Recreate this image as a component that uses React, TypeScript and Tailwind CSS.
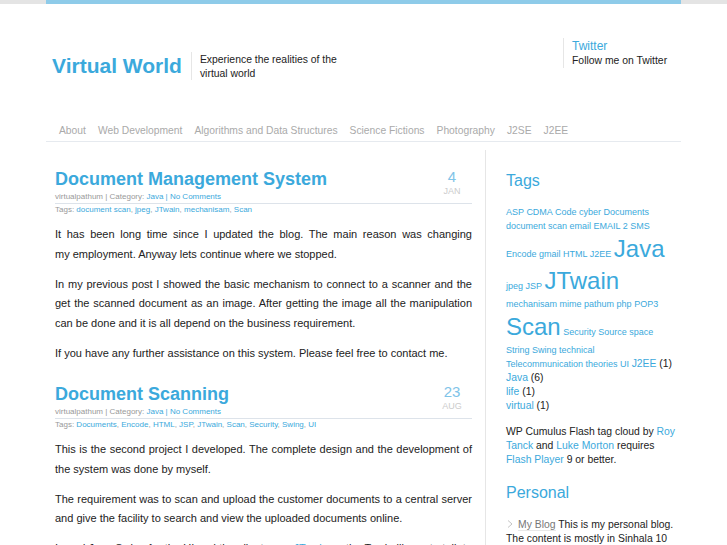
const blue = 'text-[#3ba9dc]';

function Post({
  title,
  day,
  month,
  tags,
  children,
}: {
  title: string;
  day: string;
  month: string;
  tags: string[];
  children: React.ReactNode;
}) {
  return (
    <article className="mb-[20px]">
      <div className="flex h-[22px] items-start">
        <h2 className={`flex-1 text-[18px] font-bold leading-[22px] ${blue}`}>{title}</h2>
        <div className="mr-[5px] w-[30px] pt-[1px] text-center">
          <div className="text-[15px] leading-[16px] text-[#7fc4e8]">{day}</div>
          <div className="text-[9px] leading-[12px] text-[#cccccc]">{month}</div>
        </div>
      </div>
      <div className="mt-[2px] border-b border-[#dde3ea] pb-[1px] text-[8px] leading-[10px] text-[#999999]">
        virtualpathum | Category: <a className={blue}>Java</a> <span className={blue}>|</span>{' '}
        <a className={blue}>No Comments</a>
      </div>
      <div className="text-[8px] leading-[11px] text-[#999999]">
        Tags:{' '}
        {tags.map((t, i) => (
          <span key={t}>
            <a className={blue}>{t}</a>
            {i < tags.length - 1 ? ', ' : ''}
          </span>
        ))}
      </div>
      <div className="mt-[10px] text-justify text-[11px] leading-[19.5px] text-[#222222] [&>p]:mb-[10.5px]">
        {children}
      </div>
    </article>
  );
}

function Tag({ big, children }: { big?: boolean; children: React.ReactNode }) {
  return big ? (
    <a className={`text-[24px] leading-[32px] ${blue}`}>{children}</a>
  ) : (
    <a className={blue}>{children}</a>
  );
}

export default function App() {
  return (
    <div className="min-h-[545px] overflow-hidden bg-white font-['Liberation_Sans',Arial,sans-serif]">
      {/* top strip */}
      <div className="h-[4px] bg-[#e4e4e4]">
        <div className="mx-auto h-full w-[635px] bg-[#8ecbe9]" />
      </div>

      <div className="mx-auto w-[635px]">
        {/* Header */}
        <header className="flex h-[116px] items-start">
          <div className="mt-[48px] flex h-[28px] items-center">
            <h1 className={`pl-[6px] text-[21px] font-bold leading-[28px] ${blue}`}>Virtual World</h1>
            <div className="ml-[9px] h-[28px] border-l border-[#e6e6e6]" />
            <p className="w-[150px] pl-[8px] pt-[2px] text-[10.4px] leading-[14px] text-[#222222]">
              Experience the realities of the virtual world
            </p>
          </div>
          <div className="ml-auto mt-[34px] w-[118px] border-l border-[#e6e6e6] pl-[8px] pt-[1px]">
            <div className={`text-[12px] leading-[14px] ${blue}`}>Twitter</div>
            <div className="text-[10.4px] leading-[15px] text-[#222222]">Follow me on Twitter</div>
          </div>
        </header>

        {/* Nav */}
        <nav className="flex gap-[12px] border-b border-[#e6eaef] pl-[13px] text-[10.3px] leading-[21px] text-[#aaaaaa]">
          <a>About</a>
          <a>Web Development</a>
          <a>Algorithms and Data Structures</a>
          <a>Science Fictions</a>
          <a>Photography</a>
          <a>J2SE</a>
          <a>J2EE</a>
        </nav>

        {/* Main */}
        <div className="flex">
          <main className="mt-[8px] w-[440px] border-r border-[#e6e6e6] pl-[9px] pr-[13px] pt-[18px]">
            <Post
              title="Document Management System"
              day="4"
              month="JAN"
              tags={['document scan', 'jpeg', 'JTwain', 'mechanisam', 'Scan']}
            >
              <p>
                It has been long time since I updated the blog. The main reason was changing my&nbsp;employment. Anyway
                lets continue where we stopped.
              </p>
              <p>
                In my previous post I showed the basic mechanism to connect to a scanner and the get the scanned document
                as an image. After getting the image all the manipulation can be done and it is all depend on the
                business requirement.
              </p>
              <p>If you have any further assistance on this system. Please feel free to contact me.</p>
            </Post>

            <Post
              title="Document Scanning"
              day="23"
              month="AUG"
              tags={['Documents', 'Encode', 'HTML', 'JSP', 'JTwain', 'Scan', 'Security', 'Swing', 'UI']}
            >
              <p>
                This is the second project I developed. The complete design and the development of the system was done
                by myself.
              </p>
              <p>
                The requirement was to scan and upload the customer documents to a central server and give the facility
                to search and view the uploaded documents online.
              </p>
              <p>
                I used Java Swing for the UI and the client uses <a className={blue}>JTwain</a> as the Twain library to
                talk to the scanner.
              </p>
            </Post>
          </main>

          {/* Sidebar */}
          <aside className="flex-1 pl-[20px] pr-[5px] pt-[29px] text-[#222222]">
            <h3 className={`text-[16px] leading-[20px] ${blue}`}>Tags</h3>
            <div className="mt-[14px] text-[9px] leading-[14px]">
              <Tag>ASP</Tag> <Tag>CDMA</Tag> <Tag>Code</Tag> <Tag>cyber</Tag> <Tag>Documents</Tag>
              <br />
              <Tag>document scan</Tag> <Tag>email</Tag> <Tag>EMAIL 2 SMS</Tag>
              <br />
              <Tag>Encode</Tag> <Tag>gmail</Tag> <Tag>HTML</Tag> <Tag>J2EE</Tag> <Tag big>Java</Tag>
              <br />
              <Tag>jpeg</Tag> <Tag>JSP</Tag> <Tag big>JTwain</Tag>
              <br />
              <Tag>mechanisam</Tag> <Tag>mime</Tag> <Tag>pathum</Tag> <Tag>php</Tag> <Tag>POP3</Tag>
              <br />
              <Tag big>Scan</Tag> <Tag>Security</Tag> <Tag>Source</Tag> <Tag>space</Tag>
              <br />
              <Tag>String</Tag> <Tag>Swing</Tag> <Tag>technical</Tag>
              <br />
              <Tag>Telecommunication</Tag> <Tag>theories</Tag> <Tag>UI</Tag>{' '}
              <span className="text-[10.4px]">
                <a className={blue}>J2EE</a> (1)
              </span>
            </div>
            <div className="text-[10.4px] leading-[14px]">
              <div>
                <a className={blue}>Java</a> (6)
              </div>
              <div>
                <a className={blue}>life</a> (1)
              </div>
              <div>
                <a className={blue}>virtual</a> (1)
              </div>
            </div>

            <p className="mt-[12px] text-[10.4px] leading-[14px]">
              WP Cumulus Flash tag cloud by <a className={blue}>Roy Tanck</a> and{' '}
              <a className={blue}>Luke Morton</a> requires <a className={blue}>Flash Player</a> 9 or better.
            </p>

            <h3 className={`mt-[16px] text-[16px] leading-[20px] ${blue}`}>Personal</h3>
            <p className="mt-[15px] text-[10.4px] leading-[14px]">
              <span className="inline-flex items-center align-baseline">
                <svg width="6" height="8" viewBox="0 0 6 8" className="mr-[5px] ml-[1px]">
                  <path d="M1 0.5 L5 4 L1 7.5" fill="none" stroke="#c4c4c4" strokeWidth="1" />
                </svg>
              </span>
              <a className="border-b border-[#e8e8e8] text-[#777777]">My Blog</a> This is my personal blog. The content
              is mostly in Sinhala 10
            </p>
          </aside>
        </div>
      </div>
    </div>
  );
}
